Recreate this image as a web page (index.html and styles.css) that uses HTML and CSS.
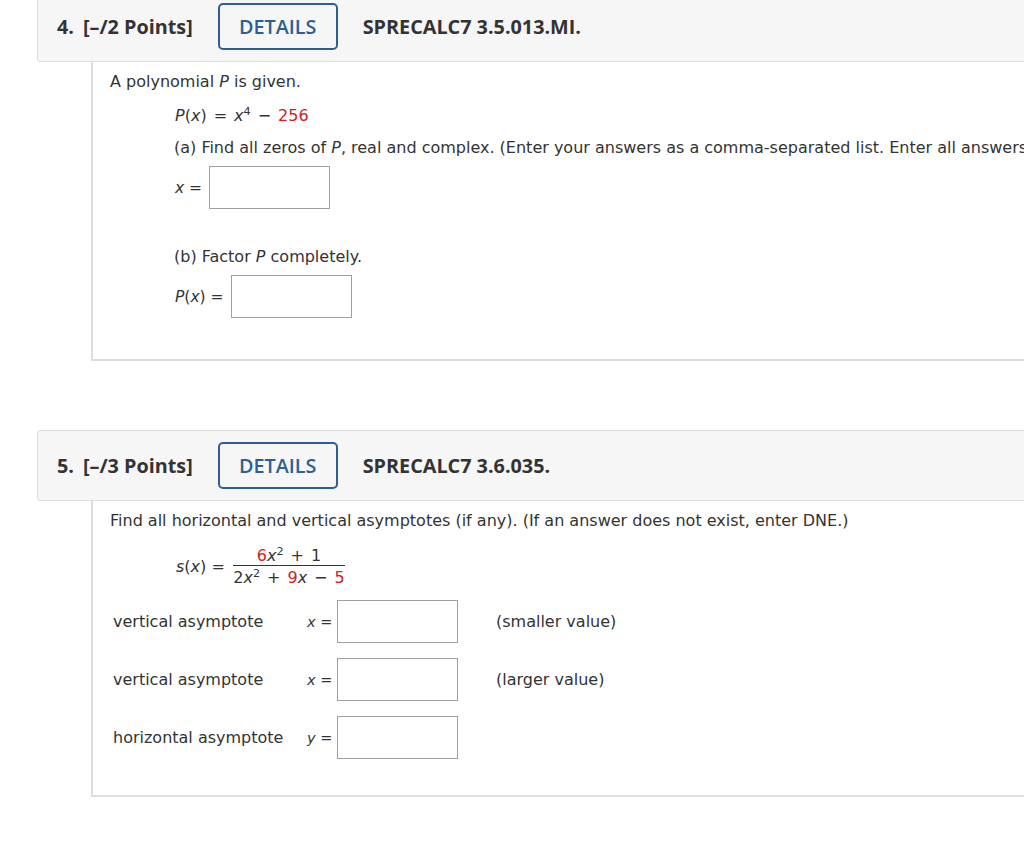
FILE: index.html
```html
<!DOCTYPE html>
<html>
<head>
<meta charset="utf-8">
<link rel="stylesheet" href="styles.css">
</head>
<body>
<div class="page">
  <section class="question">
    <div class="qhead">
      <span class="qnum">4.</span>
      <span class="qpts">[–/2 Points]</span>
      <span class="details">DETAILS</span>
      <span class="qcode">SPRECALC7 3.5.013.MI.</span>
    </div>
    <div class="qbody q4">
      <p class="line">A polynomial <i>P</i> is given.</p>
      <div class="indent">
        <p class="line math1"><i>P</i>(<i>x</i>)<span class="op">=</span><i>x</i><sup>4</sup><span class="op">−</span><span class="red">256</span></p>
        <p class="line parta">(a) Find all zeros of <i>P</i>, real and complex. (Enter your answers as a comma-separated list. Enter all answers including repetitions.)</p>
        <div class="ansrow first"><span class="lbl"><i>x</i> =</span><span class="box"></span></div>
        <p class="line partb">(b) Factor <i>P</i> completely.</p>
        <div class="ansrow"><span class="lbl"><i>P</i>(<i>x</i>) =</span><span class="box"></span></div>
      </div>
    </div>
  </section>

  <section class="question second">
    <div class="qhead">
      <span class="qnum">5.</span>
      <span class="qpts">[–/3 Points]</span>
      <span class="details">DETAILS</span>
      <span class="qcode">SPRECALC7 3.6.035.</span>
    </div>
    <div class="qbody q5">
      <p class="line">Find all horizontal and vertical asymptotes (if any). (If an answer does not exist, enter DNE.)</p>
      <div class="fracline">
        <span class="fname"><i>s</i>(<i>x</i>) =</span>
        <span class="frac">
          <span class="num"><span class="red">6</span><i>x</i><sup>2</sup><span class="op">+</span>1</span>
          <span class="den">2<i>x</i><sup>2</sup><span class="op">+</span><span class="red">9</span><i>x</i><span class="op">−</span><span class="red">5</span></span>
        </span>
      </div>
      <div class="asym">
        <span class="alabel">vertical asymptote</span><span class="avar"><i>x</i> =</span><span class="box"></span><span class="anote">(smaller value)</span>
        <span class="alabel">vertical asymptote</span><span class="avar"><i>x</i> =</span><span class="box"></span><span class="anote">(larger value)</span>
        <span class="alabel">horizontal asymptote</span><span class="avar"><i>y</i> =</span><span class="box"></span><span class="anote"></span>
      </div>
    </div>
  </section>
</div>
</body>
</html>
```

FILE: styles.css
```css
html, body {
  margin: 0;
  padding: 0;
  background: #ffffff;
  overflow: hidden;
}
body {
  width: 1024px;
  height: 845px;
}
.page {
  margin-top: -9px;
  margin-left: 37px;
  width: 1100px;
}
.question.second {
  margin-top: 69px;
}
.qhead {
  box-sizing: border-box;
  height: 71px;
  display: flex;
  align-items: center;
  background: #f6f6f6;
  border: 1px solid #dcdcdc;
  border-radius: 3px;
  padding-left: 19px;
  font-family: "Open Sans", "Liberation Sans", sans-serif;
  font-weight: 700;
  font-size: 19.8px;
  color: #333333;
}
.qnum {
  margin-right: 9px;
}
.qpts {
  margin-right: 25px;
}
.details {
  box-sizing: border-box;
  width: 120px;
  height: 47px;
  display: flex;
  align-items: center;
  justify-content: center;
  border: 2px solid #2c5f93;
  border-radius: 5px;
  color: #2c5f93;
  font-weight: 600;
  margin-right: 25px;
}
.qcode {
  font-weight: 700;
}
.qbody {
  margin-left: 54px;
  border-left: 2px solid #dddddd;
  border-bottom: 2px solid #dddddd;
  font-family: "DejaVu Sans", Verdana, sans-serif;
  font-size: 16px;
  color: #333333;
  padding-left: 17px;
  white-space: nowrap;
}
.q4 {
  padding-top: 10px;
  padding-bottom: 41px;
}
.q5 {
  padding-top: 10px;
  padding-bottom: 36px;
}
.line {
  margin: 0;
  line-height: 20px;
  height: 20px;
}
.red {
  color: #cc2222;
}
.op {
  padding: 0 7px;
}
sup {
  font-size: 70%;
  line-height: 0;
  vertical-align: 0.55em;
}
.indent {
  padding-left: 64px;
}
.math1 {
  margin-top: 14px;
  padding-left: 1px;
}
.parta {
  margin-top: 12px;
}
.partb {
  margin-top: 38px;
}
.ansrow {
  display: flex;
  align-items: center;
  margin-top: 8px;
  padding-left: 1px;
}
.ansrow .lbl {
  margin-right: 7px;
  font-size: 15.5px;
}
.box {
  display: block;
  box-sizing: border-box;
  width: 121px;
  height: 43px;
  border: 1px solid #a0a0a0;
  background: #ffffff;
}
.fracline {
  display: flex;
  align-items: center;
  margin-top: 14px;
  padding-left: 66px;
}
.fname {
  margin-right: 8px;
  font-size: 16px;
}
.frac {
  display: flex;
  flex-direction: column;
  align-items: center;
}
.num {
  padding: 0 24px;
  line-height: 18px;
  padding-top: 2px;
  border-bottom: 1px solid #333333;
}
.den {
  line-height: 20px;
  padding-top: 2px;
}
.asym {
  display: grid;
  grid-template-columns: 194px 30px 121px auto;
  grid-auto-rows: 43px;
  row-gap: 15px;
  align-items: center;
  margin-top: 12px;
  padding-left: 3px;
}
.asym .avar {
  font-size: 14.5px;
}
.asym .anote {
  padding-left: 38px;
}
```
